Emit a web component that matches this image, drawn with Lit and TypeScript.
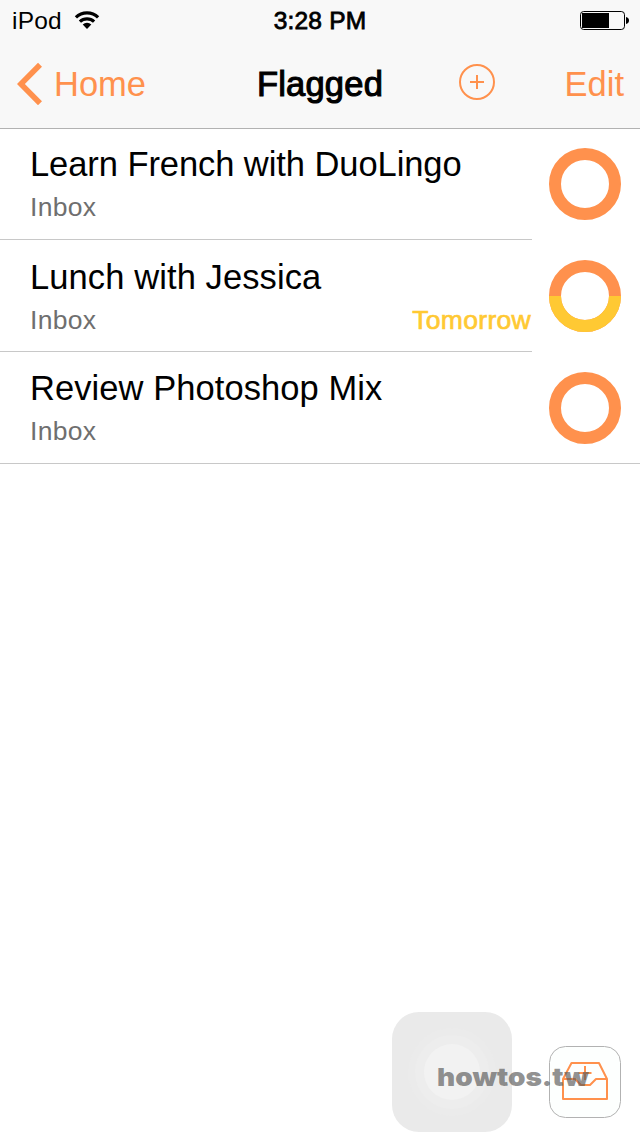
import { LitElement, html, css, svg } from "lit";
import { customElement, property } from "lit/decorators.js";

interface Task {
  title: string;
  project: string;
  due?: string;
}

const TASKS: Task[] = [
  { title: "Learn French with DuoLingo", project: "Inbox" },
  { title: "Lunch with Jessica", project: "Inbox", due: "Tomorrow" },
  { title: "Review Photoshop Mix", project: "Inbox" },
];

@customElement("status-bar")
class StatusBar extends LitElement {
  static styles = css`
    :host { display: grid; grid-template-columns: 1fr auto 1fr; align-items: center; height: 40px; color: #000; }
    .left { display: flex; align-items: center; padding-left: 12px; gap: 12px; }
    .carrier { font-size: 24.5px; line-height: 30px; letter-spacing: 0.2px; padding-top: 1px; }
    .time { font-size: 24.5px; line-height: 30px; letter-spacing: 0.2px; padding-top: 2px; -webkit-text-stroke: 0.8px #000; }
    .right { display: flex; justify-content: flex-end; padding-right: 10px; }
    svg { display: block; }
  `;
  render() {
    return html`
      <div class="left">
        <span class="carrier">iPod</span>
        <svg width="26" height="20" viewBox="0 0 26 20">
          <g fill="none" stroke="#000" stroke-width="3.2">
            <path d="M1.9 7.4a15.8 15.8 0 0 1 22.2 0" />
            <path d="M5.9 11.7a10.2 10.2 0 0 1 14.2 0" />
          </g>
          <path d="M8.7 14.5a6.3 6.3 0 0 1 8.600 0L13 19z" />
        </svg>
      </div>
      <span class="time">3:28 PM</span>
      <div class="right">
        <svg width="50" height="20" viewBox="0 0 50 20">
          <rect x="0.5" y="1.5" width="44" height="18" rx="3.2" fill="none" stroke="#000" />
          <path d="M2 3h27v15H2z" />
          <path d="M46 7c4 .8 4 6.200 0 7z" />
        </svg>
      </div>
    `;
  }
}

@customElement("nav-bar")
class NavBar extends LitElement {
  static styles = css`
    :host { display: grid; grid-template-columns: 1fr auto 1fr; height: 88px; color: #ff914d; font-size: 34.5px; line-height: 40px; }
    .back { display: flex; align-items: flex-start; padding: 22px 0 0 17px; gap: 12px; }
    .title { color: #000; letter-spacing: 0.2px; padding-top: 24px; -webkit-text-stroke: 1.1px #000; }
    .actions { display: flex; justify-content: space-between; align-items: flex-start; padding: 24px 16px 0 76px; }
    .label { padding-top: 2px; }
    svg { display: block; }
  `;
  render() {
    return html`
      <div class="back">
        <svg width="25" height="44" viewBox="0 0 25 44"><path d="M23 2.800L3.900 22 23 41.200" fill="none" stroke="#ff914d" stroke-width="5.600" /></svg>
        <span class="label">Home</span>
      </div>
      <span class="title">Flagged</span>
      <div class="actions">
        <svg width="36" height="36" viewBox="0 0 36 36" fill="none" stroke="#ff914d" stroke-width="2">
          <circle cx="18" cy="18" r="17" />
          <path d="M18 11v14M11 18h14" />
        </svg>
        <span>Edit</span>
      </div>
    `;
  }
}

@customElement("task-row")
class TaskRow extends LitElement {
  @property({ attribute: false }) task!: Task;
  static styles = css`
    :host { display: flex; height: 112px; box-sizing: border-box; }
    .body { width: 532px; box-sizing: border-box; padding: var(--row-top) 1px 0 30px; border-bottom: 1px solid #c8c8c8; display: flex; flex-direction: column; gap: 7px; }
    .title { font-size: 34.5px; line-height: 40px; letter-spacing: var(--track, 0.07px); color: #000; }
    .meta { display: flex; justify-content: space-between; font-size: 26.5px; line-height: 32px; color: #6f6f6f; }
    .project { letter-spacing: 0.3px; }
    .due { color: #ffc933; letter-spacing: 0.3px; -webkit-text-stroke: 0.7px #ffc933; }
    .check { flex: 1; padding: var(--ring-top) 0 0 17px; border-bottom: 1px solid var(--edge, transparent); }
    svg { display: block; }
  `;
  render() {
    const t = this.task;
    return html`
      <div class="body">
        <div class="title">${t.title}</div>
        <div class="meta">
          <span class="project">${t.project}</span>
          ${t.due ? html`<span class="due">${t.due}</span>` : null}
        </div>
      </div>
      <div class="check">
        <svg width="72" height="72" viewBox="0 0 72 72" fill="none" stroke-width="12">
          <circle cx="36" cy="36" r="30" stroke="#ff914d" />
          ${t.due ? svg`<path d="M6 36a30 30 0 0 0 60 0" stroke="#ffc933" />` : null}
        </svg>
      </div>
    `;
  }
}

@customElement("app-root")
class AppRoot extends LitElement {
  static styles = css`
    :host { display: block; position: relative; width: 640px; height: 1136px; overflow: hidden; background: #fff; font-family: "Liberation Sans", Arial, Helvetica, sans-serif; }
    header { background: #f8f8f8; border-bottom: 1px solid #b2b2b2; }
    task-row { --row-top: 16px; --ring-top: 20px; }
    task-row.first { height: 111px; --row-top: 15px; --ring-top: 19px; --track: -0.07px; }
    task-row.middle { --row-top: 17px; --track: 0.1px; }
    task-row.last { --edge: #c8c8c8; }
    .assistive { position: absolute; left: 392px; top: 1012px; }
    .capture { position: absolute; left: 549px; top: 1046px; }
    .mark { position: absolute; left: 437px; top: 1062px; font: 900 25px/30px Inter, sans-serif; color: rgba(90, 90, 90, 0.68); white-space: nowrap; transform: scaleX(1.12); transform-origin: 0 0; }
    svg { display: block; }
  `;
  render() {
    const pos = ["first", "middle", "last"];
    return html`
      <header>
        <status-bar></status-bar>
        <nav-bar></nav-bar>
      </header>
      <main>
        ${TASKS.map((t, i) => html`<task-row class=${pos[i]} .task=${t}></task-row>`)}
      </main>
      <svg class="assistive" width="120" height="120" viewBox="0 0 120 120">
        <rect width="120" height="120" rx="27" fill="#eaeaea" />
        <circle cx="60" cy="60" r="44" fill="#ebebeb" />
        <circle cx="60" cy="60" r="37" fill="#ededed" />
        <circle cx="60" cy="60" r="28" fill="#f2f2f2" />
      </svg>
      <svg class="capture" width="72" height="72" viewBox="0 0 72 72" fill="none">
        <rect x="0.5" y="0.5" width="71" height="71" rx="16" fill="#fdfffe" stroke="#b2b2b2" />
        <g stroke="#ff914d" stroke-width="2" stroke-linejoin="round">
          <path d="M14 33L22.500 17h27.500L58 33v20H14z" />
          <path d="M14 33h12l6 6h9l6-6h11" />
          <path d="M36 20v14M29.500 27h13" />
        </g>
      </svg>
      <div class="mark">howtos.tw</div>
    `;
  }
}
